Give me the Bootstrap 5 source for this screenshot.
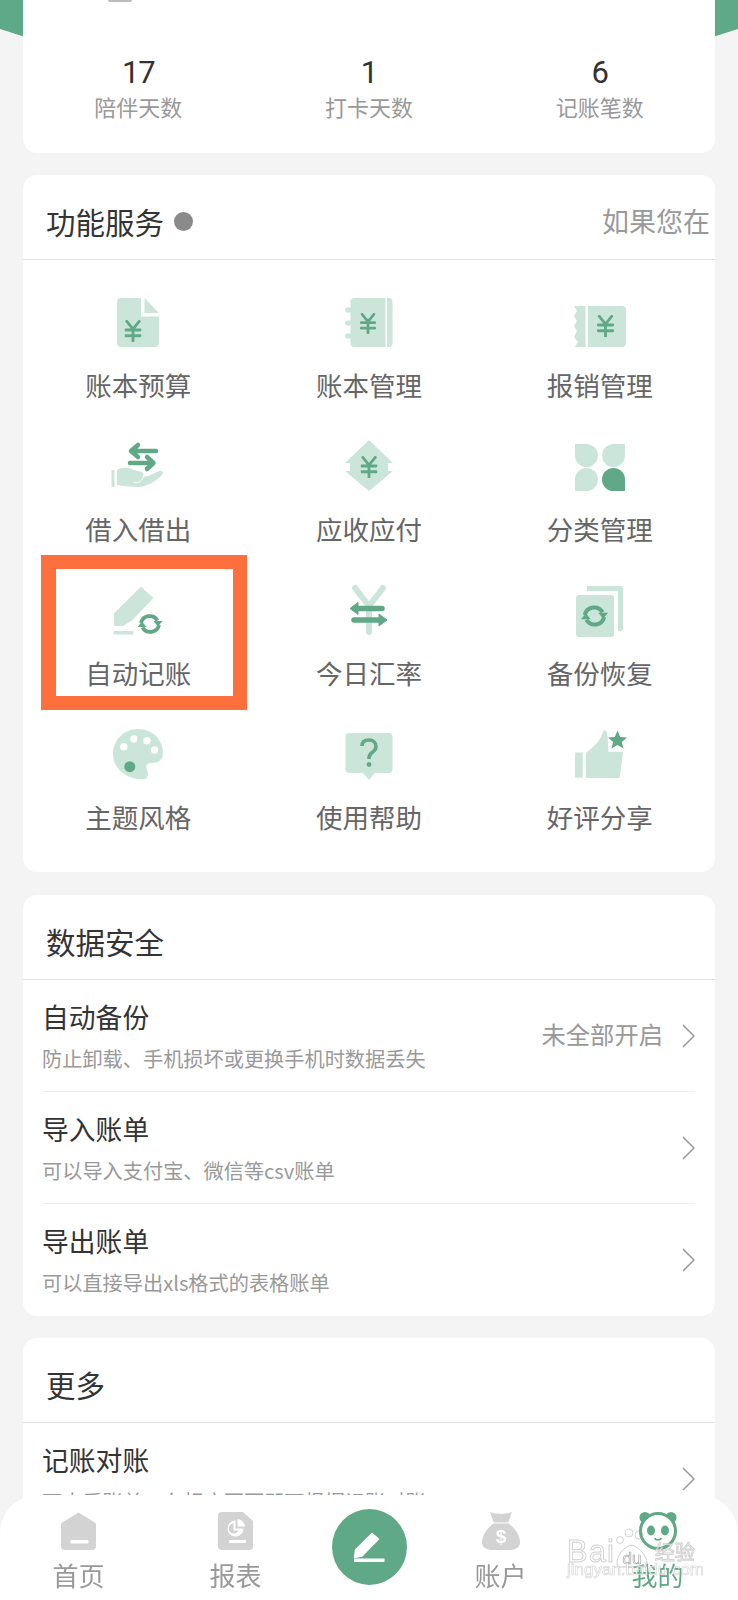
<!DOCTYPE html>
<html lang="zh-CN">
<head>
  <meta charset="UTF-8" />
  <title>我的</title>
  <meta name="viewport" content="width=device-width, initial-scale=1.0"/>
  <link href="https://cdn.jsdelivr.net/npm/bootstrap@5.3.0/dist/css/bootstrap.min.css" rel="stylesheet">
  <style>
    body {
      background: #f4f4f4;
      font-family: "Noto Sans CJK SC", "Liberation Sans", sans-serif;
      color: #333;
      height: 1600px;
      overflow: hidden;
      position: relative;
    }
    .top-band {
      position: absolute;
      top: 0;
      left: 0;
      right: 0;
      height: 36px;
      background: #5fa987;
      clip-path: polygon(0 0, 100% 0, 100% 29px, 97% 36px, 3% 36px, 0 29px);
    }
    .page-wrap {
      position: relative;
      padding: 0 23px;
    }
    .panel {
      border: 0;
      border-radius: 14px;
      background: #fff;
      margin-bottom: 22px;
    }
    .panel-first {
      border-radius: 0 0 14px 14px;
      height: 153px;
    }
    .fn-panel {
      margin-bottom: 23px;
    }
    .avatar-edge {
      width: 24px;
      height: 2px;
      margin-left: 85px;
      background: #bbb;
      border-radius: 0 0 12px 12px;
    }
    .stat-num {
      font-family: Roboto, sans-serif;
      font-size: 31px;
      letter-spacing: -1px;
      line-height: 44px;
      margin-top: 49px;
      color: #333;
    }
    .stat-label {
      font-size: 22px;
      line-height: 32px;
      margin-top: -5px;
      color: #999;
    }
    .panel-head {
      height: 85px;
      padding: 9px 5px 0 23px;
      border-bottom: 1px solid #e3e3e3;
      background: transparent;
      border-radius: 14px 14px 0 0;
      font-size: 29.500px;
      white-space: nowrap;
    }
    .head-dot {
      width: 19px;
      height: 19px;
      margin-left: 10px;
      border-radius: 50%;
      background: #8a8a8a;
    }
    .head-note {
      font-size: 27px;
      color: #999;
    }
    .fn-grid {
      padding-top: 36px;
    }
    .fn-item {
      height: 144px;
      text-align: center;
      position: relative;
    }
    .fn-icon {
      display: block;
      width: 64px;
      height: 56px;
      margin: -2px auto 17px;
    }
    .fn-label {
      font-size: 26.500px;
      line-height: 36px;
      color: #666;
    }
    .select-frame {
      position: absolute;
      top: -29px;
      left: 18px;
      width: 206px;
      height: 155px;
      border: 14px solid #fd6f3d;
      border-left-width: 15px;
    }
    .rec-item {
      height: 112px;
      margin: 0 20px 0 19px;
      padding: 20px 0 0;
      background: transparent;
      border-color: #eee;
    }
    .rec-title {
      font-size: 26.800px;
      line-height: 36px;
      margin-top: -1px;
      color: #333;
    }
    .rec-sub {
      font-size: 20.200px;
      line-height: 28px;
      margin-top: 10px;
      color: #999;
    }
    .rec-side {
      height: 71px;
    }
    .rec-status {
      font-size: 24.300px;
      color: #999;
      margin-right: 19px;
      margin-top: -2px;
    }
    .chev {
      width: 13px;
      height: 24px;
      flex-shrink: 0;
    }
    .tabbar {
      height: 105px;
      background: #fff;
      border-radius: 38px 38px 0 0;
      display: grid;
      grid-template-columns: 157px 157px 110px 153px 161px;
      text-align: center;
    }
    .tab-cell {
      padding-top: 17px;
      font-size: 26px;
      line-height: 36px;
      color: #999;
    }
    .tab-cell svg {
      display: block;
      margin: 0 auto 7px;
    }
    .tab-active {
      color: #5fa987;
    }
    .edit-circle {
      width: 75px;
      height: 76px;
      margin: 14px auto 0;
      border-radius: 50%;
      background: #5fa987;
    }
    .edit-circle svg {
      display: block;
    }
    .baidu-mark {
      position: absolute;
      left: 567px;
      top: 32px;
      width: 132px;
      pointer-events: none;
      color: rgba(255, 255, 255, .8);
      -webkit-text-stroke: 1px rgba(165, 165, 165, .5);
    }
    .mark-bai {
      font-family: "Liberation Sans", sans-serif;
      font-size: 31px;
      line-height: 34px;
      letter-spacing: 1px;
    }
    .mark-jy {
      font-size: 20px;
      line-height: 34px;
    }
    .mark-url {
      font-family: "Liberation Sans", sans-serif;
      font-size: 17px;
      line-height: 20px;
      margin-top: -9px;
      -webkit-text-stroke-width: .6px;
    }
  </style>
</head>
<body>
  <!-- shared glyphs for the service icons -->
  <svg width="0" height="0" class="position-absolute">
    <symbol id="yuan" viewBox="0 0 17 23">
      <path d="M2 1.500 8.500 9.500 15 1.500M8.500 9.500V22.500M1 10.500H16M1 16.500H16" fill="none" stroke="#5fa987" stroke-width="3" stroke-linecap="round"/>
    </symbol>
    <symbol id="sync" viewBox="0 0 26 26">
      <path d="M4 12A9 9 0 0 1 20.500 9.500M22 14A9 9 0 0 1 5.500 16.500" fill="none" stroke="#5fa987" stroke-width="3.800"/>
      <path d="M16.500 10H25.500L21 15.500ZM.5 16H9.500L5 10.500Z" fill="#5fa987"/>
    </symbol>
  </svg>

  <div class="top-band"></div>

  <div class="page-wrap">
    <div class="panel panel-first">
      <div class="avatar-edge"></div>
      <div class="row g-0 text-center">
        <div class="col-4"><div class="stat-num">17</div><div class="stat-label">陪伴天数</div></div>
        <div class="col-4"><div class="stat-num">1</div><div class="stat-label">打卡天数</div></div>
        <div class="col-4"><div class="stat-num">6</div><div class="stat-label">记账笔数</div></div>
      </div>
    </div>

    <div class="card panel fn-panel">
      <div class="panel-head d-flex align-items-center">
        <span>功能服务</span>
        <span class="head-dot"></span>
        <span class="head-note ms-auto">如果您在</span>
      </div>
      <div class="row row-cols-3 g-0 fn-grid">
        <div class="col fn-item">
          <svg class="fn-icon" viewBox="0 0 64 56">
            <path d="M15 4H35V22.500H53V49A4 4 0 0 1 49 53H15A4 4 0 0 1 11 49V8A4 4 0 0 1 15 4Z" fill="#cbe5da"/>
            <path d="M38.500 4 53 19H38.500Z" fill="#cbe5da"/>
            <use href="#yuan" x="18.500" y="26" width="17" height="22"/>
          </svg>
          <div class="fn-label">账本预算</div>
        </div>
        <div class="col fn-item">
          <svg class="fn-icon" viewBox="0 0 64 56">
            <rect x="13.500" y="4" width="42" height="49" rx="4" fill="#cbe5da"/>
            <rect x="8" y="13.500" width="7" height="5" rx="2.500" fill="#cbe5da"/>
            <rect x="8" y="26.500" width="7" height="5" rx="2.500" fill="#cbe5da"/>
            <rect x="8" y="39.500" width="7" height="5" rx="2.500" fill="#cbe5da"/>
            <rect x="48.500" y="4" width="1.500" height="49" fill="#fff"/>
            <use href="#yuan" x="23" y="19" width="16" height="21"/>
          </svg>
          <div class="fn-label">账本管理</div>
        </div>
        <div class="col fn-item">
          <svg class="fn-icon" viewBox="0 0 64 56">
            <path d="M6 12H17.500V53H7L10 48 6 43 9 37 6 32 9 27 6 22 9 17Z" fill="#cbe5da"/>
            <path d="M20 12H54A4 4 0 0 1 58 16V49A4 4 0 0 1 54 53H20Z" fill="#cbe5da"/>
            <use href="#yuan" x="28.500" y="21" width="18" height="22"/>
          </svg>
          <div class="fn-label">报销管理</div>
        </div>

        <div class="col fn-item">
          <svg class="fn-icon" viewBox="0 0 64 56">
            <rect x="5.500" y="32" width="3" height="17" fill="#cbe5da"/>
            <path d="M11 32C16 29 22 29 28 32L36 34C38 35 38 38 36 39L42 38 53 33C56 32 58 35 56 37 50 43 42 48 33 49 25 49 18 48 11 47Z" fill="#cbe5da"/>
            <path d="M27 44C31 46 35 44 38 39" fill="none" stroke="#fff"/>
            <path d="M50 13H26M32 7 25 13 32 19M24 25H46M41 19 47.500 25 41 31" fill="none" stroke="#5fa987" stroke-width="4.500" stroke-linecap="round" stroke-linejoin="round"/>
          </svg>
          <div class="fn-label">借入借出</div>
        </div>
        <div class="col fn-item">
          <svg class="fn-icon" viewBox="0 0 64 56">
            <path d="M32 2 8 25H13V33H8L32 53 56 33H51V25H56Z" fill="#cbe5da"/>
            <use href="#yuan" x="23.500" y="18" width="17" height="22"/>
          </svg>
          <div class="fn-label">应收应付</div>
        </div>
        <div class="col fn-item">
          <svg class="fn-icon" viewBox="0 0 64 56">
            <path d="M7 6H18.500A11.500 11.500 0 0 1 18.500 29 11.500 11.500 0 0 1 7 17.500Z" fill="#cbe5da"/>
            <path d="M57 6H45.500A11.500 11.500 0 0 0 45.500 29 11.500 11.500 0 0 0 57 17.500Z" fill="#cbe5da"/>
            <path d="M7 53H18.500A11.500 11.500 0 0 0 18.500 30 11.500 11.500 0 0 0 7 41.500Z" fill="#cbe5da"/>
            <path d="M57 53H45.500A11.500 11.500 0 0 1 45.500 30 11.500 11.500 0 0 1 57 41.500Z" fill="#5fa987"/>
          </svg>
          <div class="fn-label">分类管理</div>
        </div>

        <div class="col fn-item">
          <svg class="fn-icon" viewBox="0 0 64 56">
            <path d="M35 6 46 16 25 38 17 43H9V32Z" fill="#cbe5da" stroke="#cbe5da" stroke-width="2" stroke-linejoin="round"/>
            <circle cx="44" cy="42" r="14" fill="#fff"/>
            <rect x="7.500" y="49" width="20" height="3.500" rx="1" fill="#cbe5da"/>
            <use href="#sync" x="31" y="29" width="26" height="26"/>
          </svg>
          <div class="fn-label">自动记账</div>
          <div class="select-frame"></div>
        </div>
        <div class="col fn-item">
          <svg class="fn-icon" viewBox="0 0 64 56">
            <path d="M18 6 32 24 46 6M32 24V50" fill="none" stroke="#cbe5da" stroke-width="6" stroke-linecap="round" stroke-linejoin="round"/>
            <path d="M45 26.500H20M17 38H43" stroke="#5fa987" stroke-width="5.500" stroke-linecap="round"/>
            <path d="M13 26.500 21 20.500V32.500ZM50 38 42 32V44Z" fill="#5fa987" stroke="#5fa987" stroke-linejoin="round"/>
          </svg>
          <div class="fn-label">今日汇率</div>
        </div>
        <div class="col fn-item">
          <svg class="fn-icon" viewBox="0 0 64 56">
            <path d="M19 4H53A2 2 0 0 1 55 6V47A2 2 0 0 1 53 49H50V9H19Z" fill="#cbe5da"/>
            <rect x="8" y="13" width="38" height="42" rx="3" fill="#cbe5da"/>
            <use href="#sync" x="12.500" y="20" width="28" height="28"/>
          </svg>
          <div class="fn-label">备份恢复</div>
        </div>

        <div class="col fn-item">
          <svg class="fn-icon" viewBox="0 0 64 56">
            <path d="M32 3C47 3 57 14 57 27 57 36 50 37 45 37 41 37 39 40 41 44 43 48 42 53 37 53 20 54 7 42 7 28 7 14 18 3 32 3Z" fill="#cbe5da"/>
            <circle cx="17.800" cy="20.700" r="3.700" fill="#fff"/>
            <circle cx="27.800" cy="13" r="3.700" fill="#fff"/>
            <circle cx="41" cy="14.700" r="3.700" fill="#fff"/>
            <circle cx="48.500" cy="24" r="3.700" fill="#fff"/>
            <circle cx="23.800" cy="40.700" r="5.500" fill="#5fa987"/>
          </svg>
          <div class="fn-label">主题风格</div>
        </div>
        <div class="col fn-item">
          <svg class="fn-icon" viewBox="0 0 64 56">
            <rect x="8.500" y="7" width="47" height="40" rx="4" fill="#cbe5da"/>
            <path d="M26 47 32 54 38 47Z" fill="#cbe5da"/>
            <path d="M25 20C25 15 28.500 14 32 14 36 14 39 16.500 39 20.500 39 24 36.500 25.500 34.500 27 32.500 28.500 32 30 32 33" fill="none" stroke="#5fa987" stroke-width="3.600"/>
            <circle cx="32" cy="38.500" r="2.400" fill="#5fa987"/>
          </svg>
          <div class="fn-label">使用帮助</div>
        </div>
        <div class="col fn-item">
          <svg class="fn-icon" viewBox="0 0 64 56">
            <rect x="7" y="26.500" width="7.700" height="25" fill="#cbe5da"/>
            <path d="M18 27 29 17C33 12 34 8 36 4 38 4 39 6 39.500 10L40.500 25.700H55L52 50C52 51 51 52 50 52H18Z" fill="#cbe5da"/>
            <path d="M49.500 4.500 52.200 11 59 11.500 53.800 16 55.500 22.500 49.500 19 43.500 22.500 45.200 16 40 11.500 46.800 11Z" fill="#5fa987"/>
          </svg>
          <div class="fn-label">好评分享</div>
        </div>
      </div>
    </div>

    <div class="card panel">
      <div class="panel-head d-flex align-items-center">数据安全</div>
      <div class="list-group list-group-flush">
        <div class="list-group-item rec-item d-flex">
          <div class="flex-grow-1">
            <div class="rec-title">自动备份</div>
            <div class="rec-sub">防止卸载、手机损坏或更换手机时数据丢失</div>
          </div>
          <div class="rec-side d-flex align-items-center">
            <span class="rec-status">未全部开启</span>
            <svg class="chev" viewBox="0 0 13 24"><path d="M1 1 12 12 1 23" fill="none" stroke="#999" stroke-width="1.500"/></svg>
          </div>
        </div>
        <div class="list-group-item rec-item d-flex">
          <div class="flex-grow-1">
            <div class="rec-title">导入账单</div>
            <div class="rec-sub">可以导入支付宝、微信等csv账单</div>
          </div>
          <div class="rec-side d-flex align-items-center">
            <svg class="chev" viewBox="0 0 13 24"><path d="M1 1 12 12 1 23" fill="none" stroke="#999" stroke-width="1.500"/></svg>
          </div>
        </div>
        <div class="list-group-item rec-item d-flex">
          <div class="flex-grow-1">
            <div class="rec-title">导出账单</div>
            <div class="rec-sub">可以直接导出xls格式的表格账单</div>
          </div>
          <div class="rec-side d-flex align-items-center">
            <svg class="chev" viewBox="0 0 13 24"><path d="M1 1 12 12 1 23" fill="none" stroke="#999" stroke-width="1.500"/></svg>
          </div>
        </div>
      </div>
    </div>

    <div class="card panel">
      <div class="panel-head d-flex align-items-center">更多</div>
      <div class="list-group list-group-flush">
        <div class="list-group-item rec-item d-flex">
          <div class="flex-grow-1">
            <div class="rec-title">记账对账</div>
            <div class="rec-sub">可查看账单、在相应页面即可根据记账对账</div>
          </div>
          <div class="rec-side d-flex align-items-center">
            <svg class="chev" viewBox="0 0 13 24"><path d="M1 1 12 12 1 23" fill="none" stroke="#999" stroke-width="1.500"/></svg>
          </div>
        </div>
      </div>
    </div>
  </div>

  <div class="tabbar fixed-bottom">
    <div class="tab-cell">
      <svg width="35" height="38" viewBox="0 0 35 38">
        <path d="M17.500 .5 33 10A3 3 0 0 1 35 13V34A4 4 0 0 1 31 38H4A4 4 0 0 1 0 34V13A3 3 0 0 1 2 10Z" fill="#d3d3d3"/>
        <rect x="9.500" y="28" width="18" height="3.500" rx="1" fill="#fff"/>
      </svg>
      首页
    </div>
    <div class="tab-cell">
      <svg width="35" height="38" viewBox="0 0 35 38">
        <path d="M4 0H25L35 9V34A4 4 0 0 1 31 38H4A4 4 0 0 1 0 34V4A4 4 0 0 1 4 0Z" fill="#d3d3d3"/>
        <path d="M17.500 8.500A8 8 0 1 0 25.500 16.500H17.500Z" fill="#fff"/>
        <path d="M15.500 11.500A5 5 0 1 0 20.500 18.500H15.500Z" fill="#d3d3d3"/>
        <path d="M19.500 7A8.500 8.500 0 0 1 27 14.500H19.500Z" fill="#fff"/>
        <rect x="11" y="28" width="17" height="3" rx="1" fill="#fff"/>
      </svg>
      报表
    </div>
    <div class="tab-cell p-0">
      <div class="edit-circle">
        <svg width="75" height="76" viewBox="0 0 75 76">
          <path d="M40 24.500 46.500 30 30 47 22.500 48.500 23.500 41Z" fill="#fff" stroke="#fff" stroke-width="1.500" stroke-linejoin="round"/>
          <rect x="22" y="49.500" width="30.500" height="3.500" fill="#fff"/>
        </svg>
      </div>
    </div>
    <div class="tab-cell">
      <svg width="38" height="38" viewBox="0 0 38 38">
        <path d="M8 0C12 2 15 1 19 2 23 1 26 2 30 0L26 11C34 17 38 24 38 30 38 36 33 38 27 38H11C5 38 0 36 0 30 0 24 4 17 12 11Z" fill="#d3d3d3"/>
        <path d="M12 11H26" stroke="#fff" stroke-width="1"/>
        <text x="19" y="31" text-anchor="middle" font-family="Liberation Sans, sans-serif" font-weight="700" font-size="19" fill="#fff">$</text>
      </svg>
      账户
    </div>
    <div class="tab-cell tab-active">
      <svg width="40" height="38" viewBox="0 0 40 38">
        <circle cx="7" cy="5.500" r="5.500" fill="#5fa987"/>
        <circle cx="33" cy="5.500" r="5.500" fill="#5fa987"/>
        <circle cx="20" cy="19" r="17.500" fill="#fff" stroke="#5fa987" stroke-width="3"/>
        <ellipse cx="13" cy="18.500" rx="4" ry="5" fill="#5fa987"/>
        <ellipse cx="27" cy="18.500" rx="4" ry="5" fill="#5fa987"/>
        <path d="M16.500 26C18 28.500 22 28.500 23.500 26" fill="none" stroke="#5fa987" stroke-width="1.500"/>
      </svg>
      我的
    </div>

    <!-- Baidu jingyan watermark over the tab bar -->
    <div class="baidu-mark">
      <div class="d-flex align-items-end">
        <span class="mark-bai">Bai</span>
        <svg class="flex-shrink-0" width="36" height="42" viewBox="0 0 36 42">
          <circle cx="5" cy="13" r="3.500" fill="none" stroke="#aaa" opacity=".5"/>
          <circle cx="14" cy="6" r="4" fill="none" stroke="#aaa" opacity=".5"/>
          <circle cx="24" cy="8" r="4" fill="none" stroke="#aaa" opacity=".5"/>
          <path d="M3 40C-1 32 8 20 16 18 25 20 35 32 31 40Z" fill="rgba(255,255,255,.5)" stroke="#aaa" opacity=".6"/>
          <text x="17" y="37" text-anchor="middle" font-family="Liberation Sans, sans-serif" font-size="17" fill="#fff" stroke="#aaa" stroke-width=".7">du</text>
        </svg>
        <span class="mark-jy ms-1">经验</span>
      </div>
      <div class="mark-url">jingyan.baidu.com</div>
    </div>
  </div>

  <script src="https://cdn.jsdelivr.net/npm/bootstrap@5.3.0/dist/js/bootstrap.bundle.min.js"></script>
</body>
</html>
